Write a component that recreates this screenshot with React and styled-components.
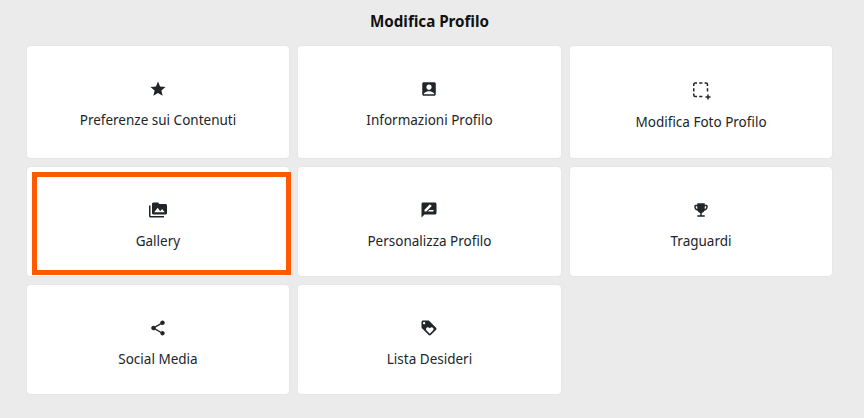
import React from 'react';
import styled, { createGlobalStyle } from 'styled-components';
import {
  MdStar,
  MdAccountBox,
  MdPermMedia,
  MdRateReview,
  MdEmojiEvents,
  MdShare,
  MdLoyalty,
} from 'react-icons/md';

const GlobalStyle = createGlobalStyle`
  html, body {
    margin: 0;
    padding: 0;
    background: #ebebeb;
  }
  body {
    font-family: "Noto Sans", "Open Sans", sans-serif;
    color: #212529;
  }
`;

const Page = styled.div`
  width: 864px;
  height: 418px;
  padding: 11px 31.5px 0 26.5px;
  box-sizing: border-box;
  overflow: hidden;
`;

const Title = styled.h1`
  margin: 0 0 13.7px;
  font-size: 15.2px;
  line-height: 21px;
  font-weight: 700;
  color: #111;
  text-align: center;
`;

const Grid = styled.div`
  display: grid;
  grid-template-columns: repeat(3, 1fr);
  gap: 8.64px;
`;

const Card = styled.div`
  position: relative;
  display: flex;
  flex-direction: column;
  align-items: center;
  gap: 13px;
  height: ${(p) => p.$height}px;
  padding-top: 34.5px;
  box-sizing: border-box;
  background: #fff;
  border-radius: 4px;
  box-shadow: 0 0 0 1px #e6e6e6;
`;

const IconSlot = styled.span`
  display: flex;
  color: #212529;
  font-size: 18px;
`;

const Label = styled.span`
  font-size: 13.5px;
  line-height: 18px;
  color: #212529;
`;

const Highlight = styled.div`
  position: absolute;
  top: 5px;
  left: 5px;
  right: -1.3px;
  bottom: 1px;
  border: 5px solid #ff5a00;
  pointer-events: none;
`;

const DashedSelectIcon = () => (
  <svg width="20" height="20" viewBox="0 0 20 20" fill="none" stroke="currentColor" strokeWidth="1.5">
    <path d="M2.75 6V4.5a1.5 1.5 0 0 1 1.5-1.5H6" />
    <path d="M8.2 3h3.2" />
    <path d="M13.6 3h1.4a1.5 1.5 0 0 1 1.5 1.5V6" />
    <path d="M16.5 8.2v3.2" />
    <path d="M2.75 8.2v3.2" />
    <path d="M2.75 13.6V15a1.5 1.5 0 0 0 1.5 1.5H6" />
    <path d="M8.2 16.5h3.2" />
    <path d="M17 14.5v5M14.5 17h5" />
  </svg>
);

const items = [
  { label: 'Preferenze sui Contenuti', Icon: MdStar, height: 112.3 },
  { label: 'Informazioni Profilo', Icon: MdAccountBox, height: 112.3 },
  { label: 'Modifica Foto Profilo', Icon: DashedSelectIcon, height: 112.3 },
  { label: 'Gallery', Icon: MdPermMedia, height: 109.6, active: true },
  { label: 'Personalizza Profilo', Icon: MdRateReview, height: 109.6 },
  { label: 'Traguardi', Icon: MdEmojiEvents, height: 109.6 },
  { label: 'Social Media', Icon: MdShare, height: 109.6 },
  { label: 'Lista Desideri', Icon: MdLoyalty, height: 109.6 },
];

export default function App() {
  return (
    <Page>
      <GlobalStyle />
      <Title>Modifica Profilo</Title>
      <Grid>
        {items.map(({ label, Icon, height, active }) => (
          <Card key={label} $height={height}>
            <IconSlot>
              <Icon />
            </IconSlot>
            <Label>{label}</Label>
            {active && <Highlight />}
          </Card>
        ))}
      </Grid>
    </Page>
  );
}
